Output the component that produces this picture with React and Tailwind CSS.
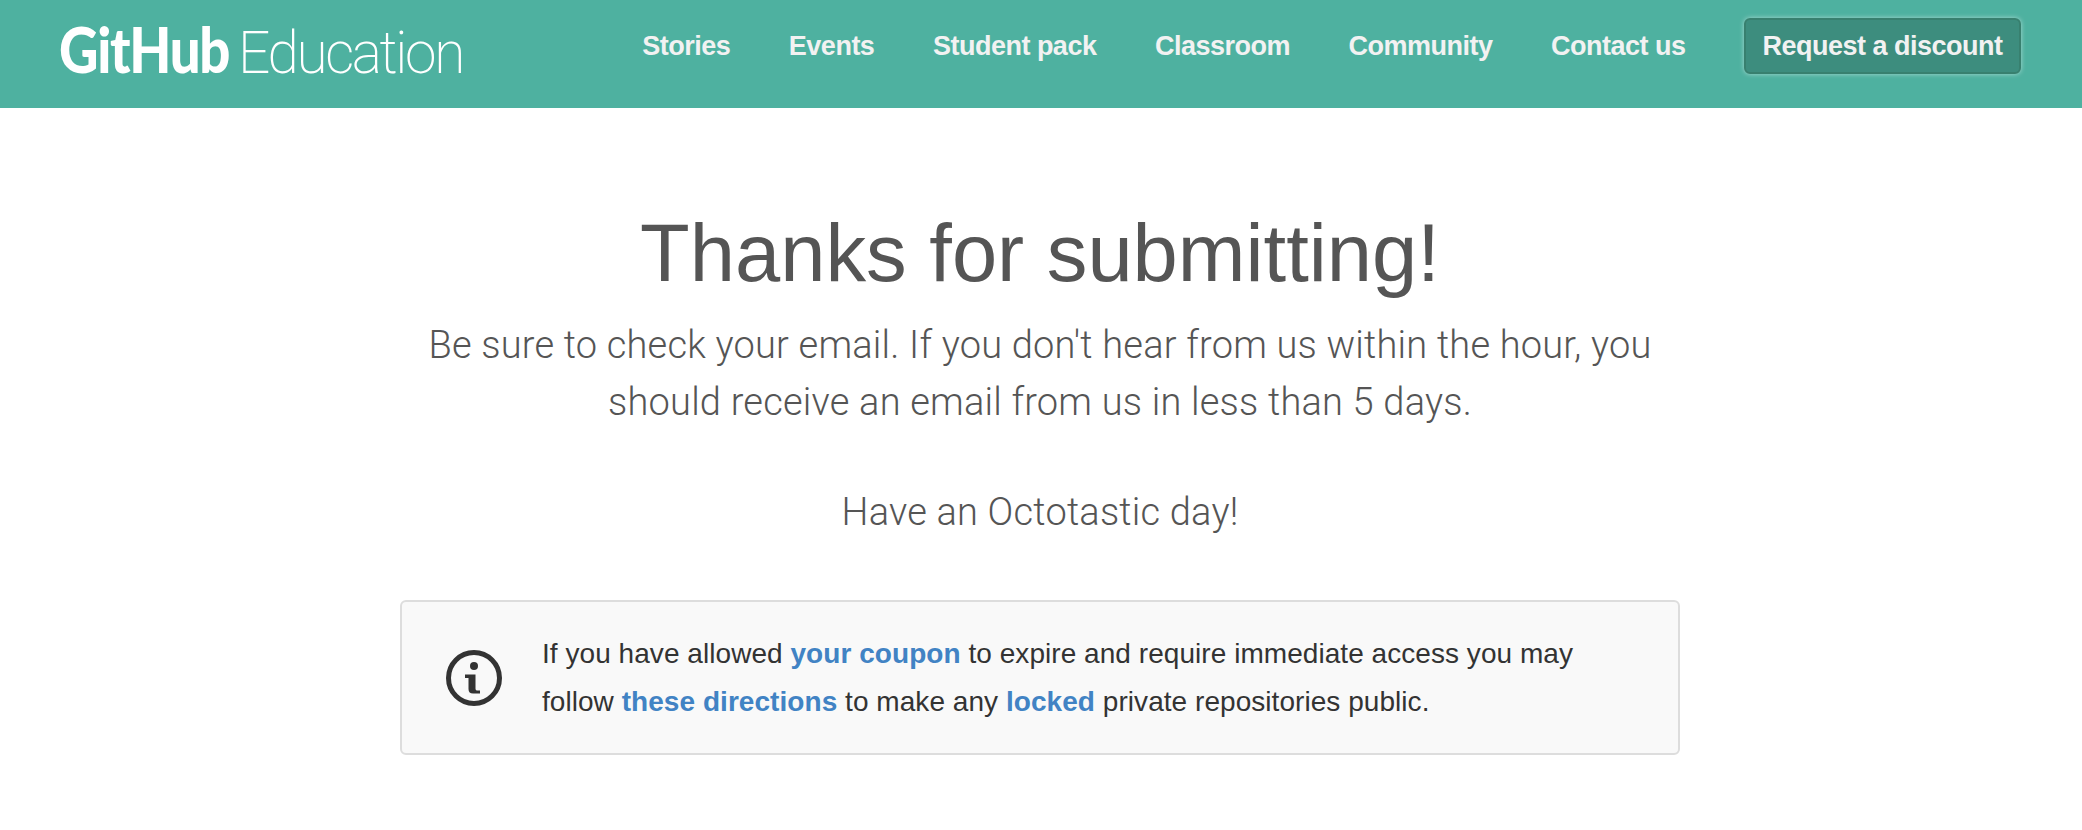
export default function App() {
  const sans = "font-['Liberation_Sans',Arial,sans-serif]";
  const nav = ["Stories", "Events", "Student pack", "Classroom", "Community", "Contact us"];
  return (
    <div className={`min-h-[830px] bg-white ${sans}`}>
      <header className="flex h-[108px] items-start justify-between bg-[#4eb1a0] pl-[59px] pr-[61px] pt-[18px]">
        <a className="flex w-[404px] items-baseline text-white leading-none whitespace-nowrap">
          <span className="inline-block w-[170px] origin-left scale-x-[0.88] font-['Lato',sans-serif] text-[62px] font-black tracking-[-1.5px]">GitHub</span>
          <span className="ml-[9px] inline-block origin-left scale-x-[0.947] font-['Roboto',sans-serif] text-[60px] font-extralight tracking-[-2.5px]">Education</span>
        </a>
        <nav className="flex items-center gap-[58.5px] text-[27px] font-bold text-[#f2f2f2] tracking-[-0.5px]">
          {nav.map((n) => <a key={n}>{n}</a>)}
          <a className="flex h-[56px] w-[277px] items-center justify-center rounded-[6px] border-2 border-[#38806f] bg-[#3d8d7e] shadow-[0_0_5px_rgba(255,255,255,0.5)]">Request a discount</a>
        </nav>
      </header>
      <main className="flex flex-col items-center pr-[2px] pt-[99px]">
        <h1 className="text-[81.3px] leading-[92px] text-[#555] font-normal">Thanks for submitting!</h1>
        <p className="mt-[18px] w-[1280px] text-center font-['Roboto',sans-serif] text-[38px] font-light leading-[57px] tracking-[0.2px] text-[#555]">
          Be sure to check your email. If you don't hear from us within the hour, you<br />should receive an email from us in less than 5 days.
        </p>
        <p className="mt-[53px] text-center font-['Roboto',sans-serif] text-[38px] font-light leading-[57px] tracking-[0.2px] text-[#555]">Have an Octotastic day!</p>
        <div className="mt-[59px] flex h-[155px] w-[1280px] items-center rounded-[6px] border-2 border-[#ddd] bg-[#f9f9f9] pl-[44px]">
          <svg width="56" height="56" viewBox="0 0 56 56" className="shrink-0">
            <circle cx="28" cy="28" r="25.5" fill="none" stroke="#333" strokeWidth="5" />
            <circle cx="28" cy="16" r="4" fill="#333" />
            <path d="M19 24.5h10.5v14c0 1.500.7 2 2 2h2.500v3h-7c-3 0-4.500-1.500-4.500-4.500V28H19z" fill="#333" />
          </svg>
          <p className="ml-[40px] text-[28px] leading-[48px] tracking-[0.05px] text-[#333]">
            If you have allowed <a className="font-bold text-[#4183c4]">your coupon</a> to expire and require immediate access you may<br />
            follow <a className="font-bold text-[#4183c4]">these directions</a> to make any <a className="font-bold text-[#4183c4]">locked</a> private repositories public.
          </p>
        </div>
      </main>
    </div>
  );
}
